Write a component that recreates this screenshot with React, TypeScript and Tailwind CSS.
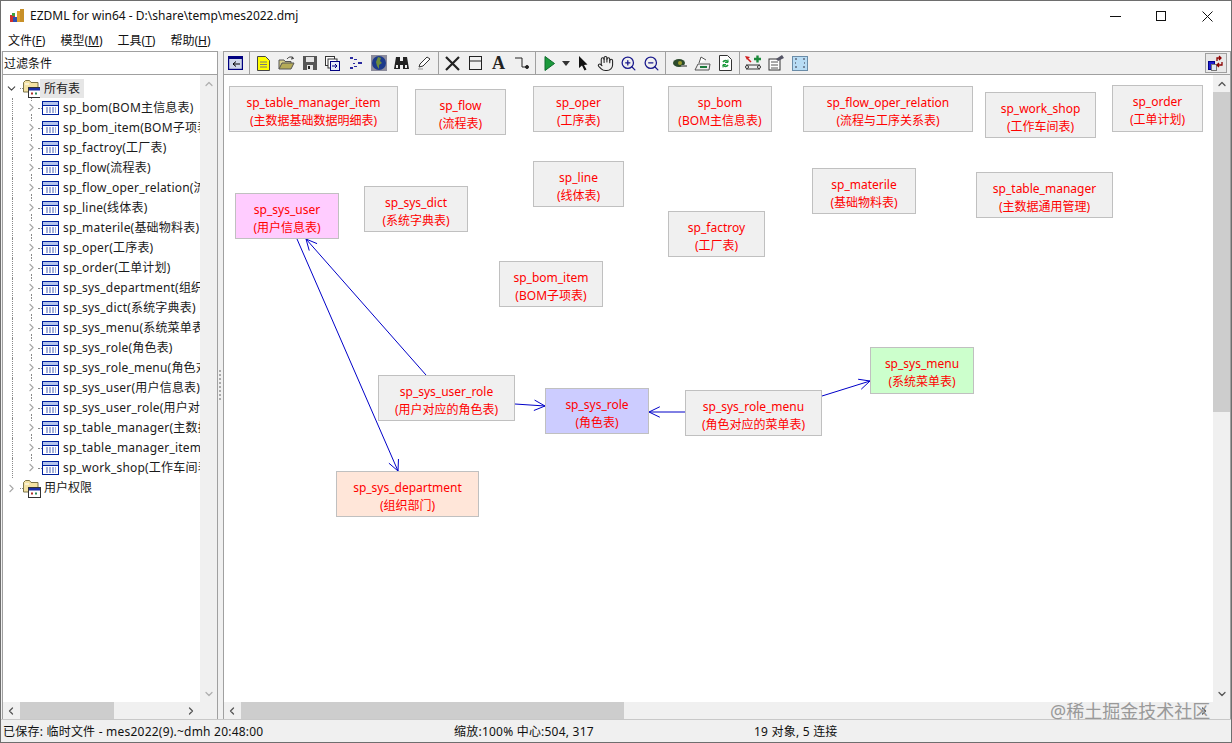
import { ChevronDown, ChevronLeft, ChevronRight, ChevronUp, Hand, ZoomIn, ZoomOut } from "lucide-react";

const FONT = "font-['Noto_Sans','Noto_Sans_CJK_SC',sans-serif]";

const TREE = [
  "sp_bom(BOM主信息表)",
  "sp_bom_item(BOM子项表)",
  "sp_factroy(工厂表)",
  "sp_flow(流程表)",
  "sp_flow_oper_relation(流程与工序关系表)",
  "sp_line(线体表)",
  "sp_materile(基础物料表)",
  "sp_oper(工序表)",
  "sp_order(工单计划)",
  "sp_sys_department(组织部门)",
  "sp_sys_dict(系统字典表)",
  "sp_sys_menu(系统菜单表)",
  "sp_sys_role(角色表)",
  "sp_sys_role_menu(角色对应的菜单表)",
  "sp_sys_user(用户信息表)",
  "sp_sys_user_role(用户对应的角色表)",
  "sp_table_manager(主数据通用管理)",
  "sp_table_manager_item(主数据基础数据明细表)",
  "sp_work_shop(工作车间表)",
];

// page coordinates: left, top, right, bottom
const NODES: { a: string; b: string; box: number[]; bg?: string }[] = [
  { a: "sp_table_manager_item", b: "(主数据基础数据明细表)", box: [229, 86, 398, 132] },
  { a: "sp_flow", b: "(流程表)", box: [415, 89, 506, 135] },
  { a: "sp_oper", b: "(工序表)", box: [533, 86, 624, 132] },
  { a: "sp_bom", b: "(BOM主信息表)", box: [668, 86, 772, 132] },
  { a: "sp_flow_oper_relation", b: "(流程与工序关系表)", box: [803, 86, 973, 132] },
  { a: "sp_work_shop", b: "(工作车间表)", box: [985, 92, 1096, 138] },
  { a: "sp_order", b: "(工单计划)", box: [1112, 85, 1203, 132] },
  { a: "sp_line", b: "(线体表)", box: [533, 161, 624, 207] },
  { a: "sp_materile", b: "(基础物料表)", box: [812, 168, 916, 214] },
  { a: "sp_table_manager", b: "(主数据通用管理)", box: [976, 172, 1113, 218] },
  { a: "sp_sys_dict", b: "(系统字典表)", box: [364, 186, 468, 232] },
  { a: "sp_sys_user", b: "(用户信息表)", box: [235, 193, 339, 239], bg: "#ffccff" },
  { a: "sp_factroy", b: "(工厂表)", box: [668, 211, 765, 257] },
  { a: "sp_bom_item", b: "(BOM子项表)", box: [499, 261, 603, 307] },
  { a: "sp_sys_user_role", b: "(用户对应的角色表)", box: [378, 375, 515, 421] },
  { a: "sp_sys_role", b: "(角色表)", box: [545, 388, 649, 434], bg: "#ccccff" },
  { a: "sp_sys_role_menu", b: "(角色对应的菜单表)", box: [685, 390, 822, 436] },
  { a: "sp_sys_menu", b: "(系统菜单表)", box: [870, 347, 974, 394], bg: "#ccffcc" },
  { a: "sp_sys_department", b: "(组织部门)", box: [336, 471, 479, 517], bg: "#ffe6d9" },
];

const LINKS = [
  [297, 239, 398, 471],
  [426, 375, 306, 239],
  [515, 404, 545, 406],
  [685, 412, 649, 412],
  [822, 396, 870, 381],
];

const ORIGIN_X = 224;
const ORIGIN_Y = 75;

function Arrow({ l }: { l: number[] }) {
  const [x1, y1, x2, y2] = l.map((v, i) => v - (i % 2 ? ORIGIN_Y : ORIGIN_X));
  const ang = Math.atan2(y2 - y1, x2 - x1);
  const head = (d: number) =>
    `${x2 - 12 * Math.cos(ang + d)},${y2 - 12 * Math.sin(ang + d)}`;
  return (
    <g>
      <line x1={x1} y1={y1} x2={x2} y2={y2} />
      <polyline points={`${head(0.45)} ${x2},${y2} ${head(-0.45)}`} />
    </g>
  );
}

function TableIcon() {
  return (
    <svg width="17" height="14" viewBox="0 0 17 14" className="shrink-0">
      <rect x="0.5" y="0.5" width="16" height="13" fill="#fff" stroke="#00209c" />
      <rect x="1" y="1" width="15" height="3" fill="#b4c4ec" />
      <path d="M1 4.500h15" stroke="#00209c" />
      <path d="M4 7h10M4 9h10M4 11h10" stroke="#4a62b4" strokeDasharray="2 1" fill="none" />
    </svg>
  );
}

function FolderIcon() {
  return (
    <svg width="18" height="19" viewBox="0 0 18 19" className="shrink-0">
      <path d="M.5 13V3.500l2-2h4l1.500 2h7V13z" fill="#f4e2a4" stroke="#7c7448" />
      <path d="M2 5h4" stroke="#fff" />
      <rect x="5.500" y="8.500" width="12" height="10" fill="#fff" stroke="#333" />
      <rect x="6" y="9" width="11" height="2.500" fill="#1c2fa8" />
      <path d="M8 14.500h2" stroke="#b03030" strokeWidth="2" />
      <path d="M12 14.500h2" stroke="#2c8a5c" strokeWidth="2" />
    </svg>
  );
}

function Tool({ children, w }: { children: React.ReactNode; w?: boolean }) {
  return (
    <div className={`flex h-[22px] items-center justify-center ${w ? "w-[10px]" : "w-[23px]"}`}>{children}</div>
  );
}

function Sep() {
  return (
    <div className="flex h-[22px] w-[5px] justify-center">
      <div className="h-full w-px bg-[#a0a0a0]" />
    </div>
  );
}

function Toolbar() {
  return (
    <div className="flex h-[24px] items-center border-y border-l border-[#a0a0a0] bg-[#f0f0f0]">
      <Tool>
        <svg width="15" height="14" viewBox="0 0 15 14">
          <rect x="0.5" y="0.5" width="14" height="13" fill="#cfd8ea" stroke="#000080" strokeWidth="1.4" />
          <rect x="1" y="1" width="13" height="2" fill="#000080" />
          <path d="M12 8H5M8 5.500 5 8l3 2.500" fill="none" stroke="#000" />
        </svg>
      </Tool>
      <Sep />
      <Tool>
        <svg width="13" height="15" viewBox="0 0 13 15">
          <path d="M.5.500h8l4 4v10H.5z" fill="#ffff00" stroke="#444" />
          <path d="M3 6h7M3 8.500h7M3 11h7" stroke="#777" />
        </svg>
      </Tool>
      <Tool>
        <svg width="17" height="15" viewBox="0 0 17 15">
          <path d="M1 13V4h5l1 1.500h6V8" fill="#d8cf8a" stroke="#555" />
          <path d="M1 13l3-6h12l-3 6z" fill="#b5ab58" stroke="#555" />
          <path d="M9 3c2-2.500 4-2.500 6-1" fill="none" stroke="#333" />
          <path d="M14 .5l1.500 2-2.500.5" fill="none" stroke="#333" />
        </svg>
      </Tool>
      <Tool>
        <svg width="14" height="14" viewBox="0 0 14 14">
          <path d="M0 0h14v14H0z" fill="#555" />
          <path d="M3 1h8v5H3z" fill="#e4e4e4" />
          <path d="M4 9h6v5H4z" fill="#e8e8e8" />
          <path d="M5 10h2v3H5z" fill="#222" />
        </svg>
      </Tool>
      <Tool>
        <svg width="15" height="15" viewBox="0 0 15 15">
          <rect x="0.5" y="0.5" width="9" height="9" fill="#fff" stroke="#333" />
          <rect x="3" y="3" width="9" height="9" fill="#fff" stroke="#333" />
          <rect x="5.500" y="5.500" width="9" height="9" fill="#e8ecf8" stroke="#000080" />
          <path d="M7 10h5M10 8l2 2-2 2" fill="none" stroke="#000080" />
        </svg>
      </Tool>
      <Tool>
        <svg width="14" height="15" viewBox="0 0 14 15" fill="#2a2aa0">
          <rect x="1" y="1" width="3" height="2" />
          <rect x="5" y="3" width="3" height="1" />
          <rect x="9" y="6" width="4" height="2" />
          <rect x="4" y="7" width="2" height="1" />
          <rect x="1" y="11" width="3" height="2" />
          <rect x="5" y="10" width="3" height="1" />
        </svg>
      </Tool>
      <Tool>
        <svg width="16" height="16" viewBox="0 0 16 16">
          <rect width="16" height="16" fill="#8c8c9c" />
          <circle cx="8" cy="8" r="7" fill="#1c3a8c" />
          <path d="M7 2l3 1-1 3 2 2-3 2v4l-2-3-1-4z" fill="#6d8c3c" />
        </svg>
      </Tool>
      <Tool>
        <svg width="17" height="14" viewBox="0 0 17 14" fill="#222">
          <path d="M3 1h4v4h3V1h4l2 12h-6V9H7v4H1z" />
          <path d="M3 9h2v3H3zM12 9h2v3h-2z" fill="#eee" />
        </svg>
      </Tool>
      <Tool>
        <svg width="15" height="14" viewBox="0 0 15 14" fill="#fff" stroke="#333">
          <path d="M2 11l1-3 7-7 3 2-7 7z" />
          <path d="M1 13h5" stroke="#999" />
        </svg>
      </Tool>
      <Sep />
      <Tool>
        <svg width="15" height="15" viewBox="0 0 15 15" stroke="#222" strokeWidth="2.200">
          <path d="M1 1l13 13M14 1 1 14" />
        </svg>
      </Tool>
      <Tool>
        <svg width="13" height="14" viewBox="0 0 13 14" fill="none" stroke="#222">
          <rect x="0.5" y="0.5" width="12" height="13" />
          <path d="M1 5h11" />
        </svg>
      </Tool>
      <Tool>
        <span className="font-['Liberation_Serif',serif] text-[18px] font-bold leading-none text-[#222]">A</span>
      </Tool>
      <Tool>
        <svg width="15" height="14" viewBox="0 0 15 14" fill="none" stroke="#222">
          <path d="M1 2h7v9h5" />
          <circle cx="13" cy="11" r="1.500" fill="#222" />
        </svg>
      </Tool>
      <Sep />
      <Tool>
        <svg width="11" height="15" viewBox="0 0 11 15">
          <path d="M1 0.500v14L10.500 7.500z" fill="#1c9a3c" stroke="#0c6a2c" />
        </svg>
      </Tool>
      <Tool w>
        <svg width="8" height="5" viewBox="0 0 8 5">
          <path d="M0 0h8L4 5z" fill="#333" />
        </svg>
      </Tool>
      <Tool>
        <svg width="10" height="15" viewBox="0 0 10 15">
          <path d="M1 0v12l3-2.500 2.500 5 2-1-2.500-4.500 3.500-.5z" fill="#111" />
        </svg>
      </Tool>
      <Tool>
        <Hand size={17} strokeWidth={1.500} className="text-[#222]" />
      </Tool>
      <Tool>
        <ZoomIn size={17} strokeWidth={1.800} className="text-[#1a1a8c]" />
      </Tool>
      <Tool>
        <ZoomOut size={17} strokeWidth={1.800} className="text-[#1a1a8c]" />
      </Tool>
      <Sep />
      <Tool>
        <svg width="14" height="10" viewBox="0 0 14 10">
          <ellipse cx="6" cy="5" rx="6" ry="4" fill="#2c4a2c" />
          <circle cx="7" cy="5" r="2" fill="#9c9c2c" />
          <path d="M8 7h6v2H9z" fill="#888" />
        </svg>
      </Tool>
      <Tool>
        <svg width="17" height="15" viewBox="0 0 17 15">
          <path d="M1 14l3-6h12l-1 6z" fill="#eee" stroke="#555" />
          <path d="M5 7l2-6 5 3" fill="#fff" stroke="#555" />
          <path d="M6 11h7" stroke="#1c7a3c" strokeWidth="2" />
        </svg>
      </Tool>
      <Tool>
        <svg width="13" height="16" viewBox="0 0 13 16">
          <path d="M.5.500h8l4 4v11H.5z" fill="#fff" stroke="#333" />
          <path d="M4 7a3 3 0 0 1 5 0M9 10a3 3 0 0 1-5 0" fill="none" stroke="#1c9a3c" strokeWidth="1.600" />
          <path d="M9 4.500v3H6M4 12.500v-3h3" fill="none" stroke="#1c9a3c" />
        </svg>
      </Tool>
      <Sep />
      <Tool>
        <svg width="17" height="16" viewBox="0 0 17 16">
          <path d="M9 4h7M12.500 .5v7" stroke="#1c8a3c" strokeWidth="2.400" />
          <path d="M0 1l5 1-3 3z" fill="#d01c1c" />
          <path d="M3 4l3 3" stroke="#d01c1c" strokeWidth="1.500" />
          <path d="M1 10h14M1 14h14" stroke="#333" />
          <circle cx="2" cy="12" r="1.500" fill="#fff" stroke="#333" />
          <circle cx="14" cy="12" r="1.500" fill="#fff" stroke="#333" />
        </svg>
      </Tool>
      <Tool>
        <svg width="17" height="16" viewBox="0 0 17 16">
          <rect x="1" y="4" width="11" height="11" fill="#fff" stroke="#333" />
          <path d="M3 7h7M3 10h7M3 13h7" stroke="#555" />
          <path d="M8 4l6-4 2 3-6 3z" fill="#556" />
        </svg>
      </Tool>
      <Tool>
        <svg width="16" height="15" viewBox="0 0 16 15">
          <rect x="0.5" y="0.5" width="15" height="14" fill="#b8dcf4" stroke="#6a8ca8" />
          <path d="M3 3h2M11 3h2M3 11h2M11 11h2M3 7h1M12 7h1" stroke="#334" />
        </svg>
      </Tool>
      <div className="flex-1" />
      <div className="mr-[3px] flex h-[20px] w-[22px] items-center justify-center border border-[#a0a0a0] bg-[#e8e8e8]">
        <svg width="18" height="17" viewBox="0 0 18 17">
          <rect x="1.500" y="6.500" width="6" height="8" fill="#1c1cd0" stroke="#00008b" />
          <rect x="4.500" y="9.500" width="5" height="6" fill="#dce6f4" stroke="#777" />
          <path d="M10 6V3h4M12 1l2 2-2 2M15 7v3h-5M12 8l-2 2 2 2" fill="none" stroke="#8b0000" strokeWidth="1.300" />
        </svg>
      </div>
    </div>
  );
}

function TreeRow({ label, last }: { label: string; last: boolean }) {
  return (
    <div className="flex h-[20px] items-center">
      <div className="ml-[9px] h-full w-[13px] shrink-0 border-l border-dotted border-[#8a8a8a]" />
      <div className="flex h-full w-[13px] shrink-0 flex-col items-center">
        <div className="h-[3px] border-l border-dotted border-[#8a8a8a]" />
        <ChevronRight size={13} strokeWidth={2} className="shrink-0 text-[#a8a8a8]" />
        {!last && <div className="h-[4px] border-l border-dotted border-[#8a8a8a]" />}
      </div>
      <div className="w-[4px] shrink-0 border-t border-dotted border-[#8a8a8a]" />
      <TableIcon />
      <span className="ml-[4px] whitespace-nowrap text-[12px] tracking-[0.2px] text-[#1a1a1a]">{label}</span>
    </div>
  );
}

function ScrollV() {
  return (
    <div className="flex w-[17px] shrink-0 flex-col bg-[#f0f0f0]">
      <div className="flex h-[17px] items-center justify-center">
        <ChevronUp size={12} strokeWidth={2.500} className="text-[#b0b0b0]" />
      </div>
      <div className="flex-1" />
      <div className="flex h-[17px] items-center justify-center">
        <ChevronDown size={12} strokeWidth={2.500} className="text-[#b0b0b0]" />
      </div>
    </div>
  );
}

export default function App() {
  return (
    <div className={`relative flex h-[743px] w-[1232px] flex-col overflow-hidden border border-[#6e6e6e] bg-[#f0f0f0] ${FONT}`}>
      <div className="flex h-[30px] shrink-0 items-center bg-white">
        <svg width="16" height="16" viewBox="0 0 16 16" className="ml-[8px] shrink-0">
          <path d="M1 7h5v7H1z" fill="#d03030" />
          <path d="M4 9h5v5H4z" fill="#3050b0" />
          <path d="M8 3h3v11H8z" fill="#e0a030" />
          <path d="M11 1h4v13h-4z" fill="#c89028" />
          <path d="M3 5h3v3H3z" fill="#40a040" />
        </svg>
        <span className="ml-[5px] text-[12px] text-[#111]">EZDML for win64 - D:\share\temp\mes2022.dmj</span>
        <div className="flex-1" />
        <div className="flex h-full items-center pr-[1px]">
          <div className="flex h-full w-[46px] items-center justify-center">
            <div className="h-px w-[11px] bg-[#111]" />
          </div>
          <div className="flex h-full w-[46px] items-center justify-center">
            <div className="h-[10px] w-[10px] border border-[#111]" />
          </div>
          <div className="flex h-full w-[46px] items-center justify-center">
            <svg width="11" height="11" viewBox="0 0 11 11" stroke="#111">
              <path d="M.5.500l10 10M10.500.500l-10 10" />
            </svg>
          </div>
        </div>
      </div>

      <div className="flex h-[20px] shrink-0 items-center gap-[15px] bg-white pl-[7px] text-[12px] text-[#111]">
        <span>文件(<span className="underline">F</span>)</span>
        <span>模型(<span className="underline">M</span>)</span>
        <span>工具(<span className="underline">T</span>)</span>
        <span>帮助(<span className="underline">H</span>)</span>
      </div>

      <div className="flex min-h-0 flex-1">
        <div className="ml-[1px] flex w-[216px] shrink-0 flex-col border-x border-[#a0a0a0]">
          <div className="flex h-[24px] shrink-0 items-center border-y border-[#a0a0a0] bg-white pl-[1px] pt-[1px] text-[12px] text-[#111]">
            过滤条件
          </div>
          <div className="flex min-h-0 flex-1 flex-col bg-white">
            <div className="flex min-h-0 flex-1">
              <div className="min-w-0 flex-1 overflow-hidden pt-[3px]">
                <div className="flex h-[20px] items-center pl-[2px]">
                  <ChevronDown size={13} strokeWidth={2} className="shrink-0 text-[#444]" />
                  <div className="ml-[2px] w-[3px] border-t border-dotted border-[#8a8a8a]" />
                  <FolderIcon />
                  <span className="ml-[-1px] bg-[#e6e6e6] px-[4px] text-[12px] leading-[19px] text-[#1a1a1a]">所有表</span>
                </div>
                {TREE.map((t, i) => (
                  <TreeRow key={t} label={t} last={i === TREE.length - 1} />
                ))}
                <div className="flex h-[20px] items-center pl-[2px]">
                  <ChevronRight size={13} strokeWidth={2} className="shrink-0 text-[#a8a8a8]" />
                  <div className="ml-[2px] w-[3px] border-t border-dotted border-[#8a8a8a]" />
                  <FolderIcon />
                  <span className="ml-[3px] text-[12px] text-[#1a1a1a]">用户权限</span>
                </div>
              </div>
              <ScrollV />
            </div>
            <div className="flex h-[17px] shrink-0 items-center bg-[#f0f0f0]">
              <ChevronLeft size={12} strokeWidth={2.500} className="ml-[2px] text-[#555]" />
              <div className="ml-[3px] h-full w-[94px] bg-[#cdcdcd]" />
              <div className="flex-1" />
              <ChevronRight size={12} strokeWidth={2.500} className="mr-[20px] text-[#555]" />
            </div>
          </div>
        </div>

        <div className="flex w-[4px] shrink-0 flex-col items-center justify-center gap-[2px]">
          <div className="h-[2px] w-[2px] bg-[#aaa]" />
          <div className="h-[2px] w-[2px] bg-[#aaa]" />
          <div className="h-[2px] w-[2px] bg-[#aaa]" />
          <div className="h-[2px] w-[2px] bg-[#aaa]" />
          <div className="h-[2px] w-[2px] bg-[#aaa]" />
          <div className="h-[2px] w-[2px] bg-[#aaa]" />
          <div className="h-[2px] w-[2px] bg-[#aaa]" />
          <div className="h-[2px] w-[2px] bg-[#aaa]" />
        </div>

        <div className="ml-[1px] flex min-w-0 flex-1 flex-col border-r border-[#a0a0a0]">
          <Toolbar />
          <div className="flex min-h-0 flex-1 flex-col border-l border-[#a0a0a0] bg-white">
            <div className="flex min-h-0 flex-1">
              <div className="relative min-w-0 flex-1 overflow-hidden bg-white text-center text-[12px] leading-[18px] text-[#ff0000]">
                <svg className="absolute left-0 top-0" width="1000" height="640" fill="none" stroke="#0000c8">
                  {LINKS.map((l, i) => (
                    <Arrow key={i} l={l} />
                  ))}
                </svg>
                {NODES.map((n) => (
                  <div
                    key={n.a}
                    className="absolute flex flex-col items-center justify-center border border-[#c0c0c0] pt-[5px] whitespace-nowrap"
                    style={{
                      left: n.box[0] - ORIGIN_X,
                      top: n.box[1] - ORIGIN_Y,
                      width: n.box[2] - n.box[0],
                      height: n.box[3] - n.box[1],
                      background: n.bg ?? "#f0f0f0",
                    }}
                  >
                    <span>{n.a}</span>
                    <span>{n.b}</span>
                  </div>
                ))}
              </div>
              <div className="flex w-[17px] shrink-0 flex-col bg-[#f0f0f0]">
                <div className="flex h-[17px] items-center justify-center">
                  <ChevronUp size={12} strokeWidth={2.500} className="text-[#555]" />
                </div>
                <div className="h-[320px] bg-[#cdcdcd]" />
                <div className="flex-1" />
                <div className="flex h-[17px] items-center justify-center">
                  <ChevronDown size={12} strokeWidth={2.500} className="text-[#555]" />
                </div>
              </div>
            </div>
            <div className="flex h-[17px] shrink-0 items-center bg-[#f0f0f0]">
              <ChevronLeft size={12} strokeWidth={2.500} className="ml-[2px] text-[#555]" />
              <div className="ml-[3px] h-full w-[383px] bg-[#cdcdcd]" />
              <div className="flex-1" />
              <ChevronRight size={12} strokeWidth={2.500} className="mr-[20px] text-[#555]" />
            </div>
          </div>
        </div>
      </div>

      <div className="flex h-[23px] shrink-0 items-center border-t border-[#c8c8c8] bg-[#f0f0f0] pt-[1px] text-[12px] tracking-[0.22px] text-[#111]">
        <span className="w-[450px] pl-[2px]">已保存: 临时文件 - mes2022(9).~dmh 20:48:00</span>
        <span className="w-[303px] pl-[3px]">缩放:100% 中心:504, 317</span>
        <span>19 对象, 5 连接</span>
      </div>

      <div className="absolute left-[1049px] top-[697px] whitespace-nowrap text-[18px] leading-[26px] text-[#999]">
        @稀土掘金技术社区
      </div>
    </div>
  );
}
